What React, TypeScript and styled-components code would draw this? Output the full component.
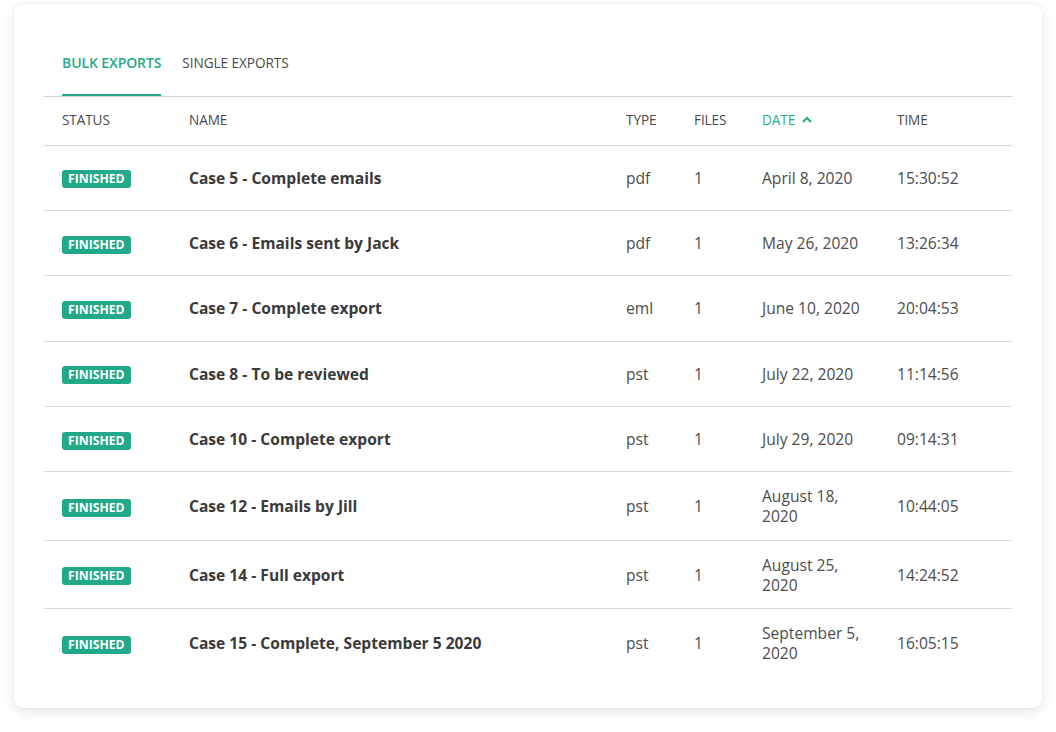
import React from "react";
import styled, { createGlobalStyle } from "styled-components";

const Global = createGlobalStyle`
  html, body { margin: 0; padding: 0; background: #ffffff; }
  body { font-family: "Open Sans", "Noto Sans", sans-serif; color: #444; }
`;

const Page = styled.div`
  padding: 4px 14px 24px 14px;
`;

const Card = styled.div`
  background: #fff;
  border-radius: 10px;
  box-shadow: 0 4px 14px rgba(0, 0, 0, 0.1), 0 0 3px rgba(0, 0, 0, 0.04);
  padding: 40px 30px 30px 30px;
  height: 704px;
  box-sizing: border-box;
`;

const Tabs = styled.div`
  display: flex;
  gap: 21px;
  padding: 0 18px;
  border-bottom: 1px solid #d6d6d6;
`;

const Tab = styled.div<{ $active?: boolean }>`
  font-size: ${(p) => (p.$active ? "14px" : "13.6px")};
  line-height: 19px;
  font-weight: ${(p) => (p.$active ? 600 : 400)};
  color: ${(p) => (p.$active ? "#27a98c" : "#4a4a4a")};
  padding: 9px 0 ${(p) => (p.$active ? "22px" : "24px")};
  border-bottom: ${(p) => (p.$active ? "2px solid #27a98c" : "none")};
  letter-spacing: ${(p) => (p.$active ? "-0.1px" : "-0.05px")};
`;

const Table = styled.table`
  width: 100%;
  border-collapse: collapse;
  table-layout: fixed;
`;

const Th = styled.th<{ $w?: number; $active?: boolean }>`
  box-sizing: border-box;
  width: ${(p) => (p.$w ? `${p.$w}px` : "auto")};
  text-align: left;
  font-size: 13.6px;
  font-weight: 400;
  color: ${(p) => (p.$active ? "#27a98c" : "#4a4a4a")};
  height: 48px;
  padding: 0 18px 2px;
  border-bottom: 1px solid #d6d6d6;
  white-space: nowrap;
  letter-spacing: -0.1px;
`;

const Tr = styled.tr<{ $last?: boolean }>`
  border-bottom: ${(p) => (p.$last ? "none" : "1px solid #d6d9de")};
`;

const Td = styled.td<{ $bold?: boolean; $tall?: boolean }>`
  box-sizing: border-box;
  font-size: 15.6px;
  line-height: 20px;
  color: ${(p) => (p.$bold ? "#3a3a3a" : "#4d4d4d")};
  font-weight: ${(p) => (p.$bold ? 700 : 400)};
  padding: 0 18px;
  height: ${(p) => (p.$tall ? "68.5px" : "65.4px")};
  vertical-align: middle;
`;

const Badge = styled.span`
  display: inline-block;
  background: #21a98a;
  color: #fff;
  font-size: 12.2px;
  font-weight: 700;
  line-height: 18px;
  padding: 0 6px;
  border-radius: 3px;
  vertical-align: middle;
`;

const SortIcon = styled.svg`
  width: 12px;
  height: 12px;
  margin-left: 6px;
  vertical-align: -1px;
`;

const rows = [
  { name: "Case 5 - Complete emails", type: "pdf", date: "April 8, 2020", time: "15:30:52" },
  { name: "Case 6 - Emails sent by Jack", type: "pdf", date: "May 26, 2020", time: "13:26:34" },
  { name: "Case 7 - Complete export", type: "eml", date: "June 10, 2020", time: "20:04:53" },
  { name: "Case 8 - To be reviewed", type: "pst", date: "July 22, 2020", time: "11:14:56" },
  { name: "Case 10 - Complete export", type: "pst", date: "July 29, 2020", time: "09:14:31" },
  { name: "Case 12 - Emails by Jill", type: "pst", date: "August 18, 2020", time: "10:44:05", tall: true },
  { name: "Case 14 - Full export", type: "pst", date: "August 25, 2020", time: "14:24:52", tall: true },
  { name: "Case 15 - Complete, September 5 2020", type: "pst", date: "September 5, 2020", time: "16:05:15", tall: true },
];

export default function App() {
  return (
    <Page>
      <Global />
      <Card>
        <Tabs>
          <Tab $active>BULK EXPORTS</Tab>
          <Tab>SINGLE EXPORTS</Tab>
        </Tabs>
        <Table>
          <thead>
            <tr>
              <Th $w={127}>STATUS</Th>
              <Th>NAME</Th>
              <Th $w={68}>TYPE</Th>
              <Th $w={68}>FILES</Th>
              <Th $w={135} $active>
                DATE
                <SortIcon viewBox="0 0 12 12">
                  <path d="M2 8 L6 4 L10 8" fill="none" stroke="#27a98c" strokeWidth="2" />
                </SortIcon>
              </Th>
              <Th $w={133}>TIME</Th>
            </tr>
          </thead>
          <tbody>
            {rows.map((r, i) => (
              <Tr key={r.name} $last={i === rows.length - 1}>
                <Td $tall={r.tall}>
                  <Badge>FINISHED</Badge>
                </Td>
                <Td $bold $tall={r.tall}>{r.name}</Td>
                <Td $tall={r.tall}>{r.type}</Td>
                <Td $tall={r.tall}>1</Td>
                <Td $tall={r.tall}>{r.date}</Td>
                <Td $tall={r.tall}>{r.time}</Td>
              </Tr>
            ))}
          </tbody>
        </Table>
      </Card>
    </Page>
  );
}
